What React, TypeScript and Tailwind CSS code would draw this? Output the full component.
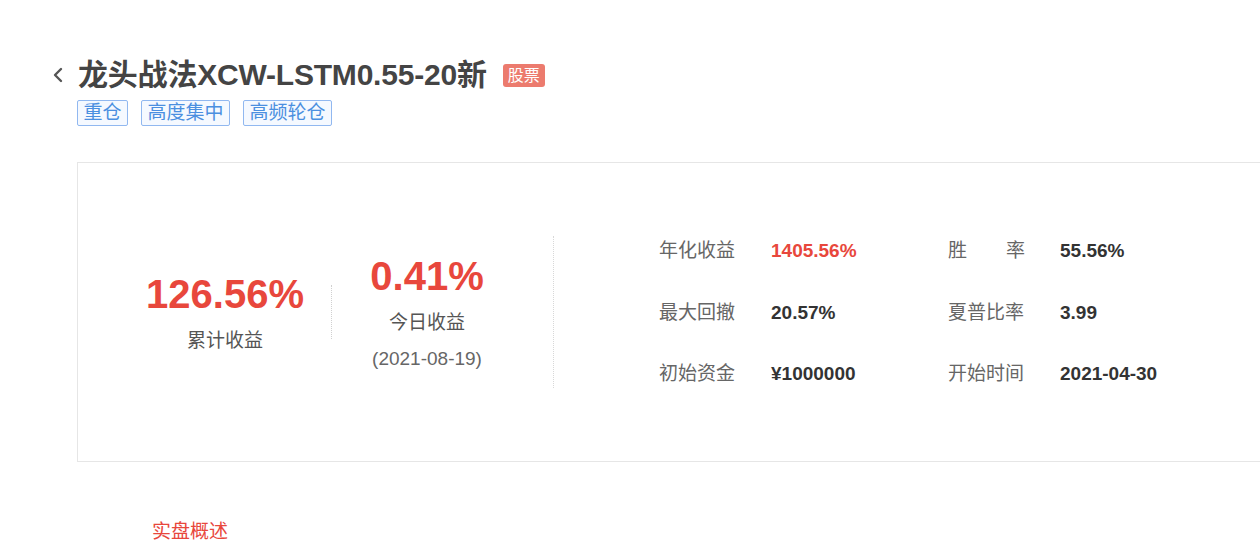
import React from "react";

const font = { fontFamily: '"Liberation Sans", Arial, "Noto Sans CJK SC", sans-serif' };

function Stat({ label, value, red, justify }: { label: string; value: string; red?: boolean; justify?: boolean }) {
  return (
    <div className="flex items-center h-[61.5px]">
      {justify ? (
        <div className="w-[77px] flex justify-between text-[19px] text-[#666666]">
          <span>{label[0]}</span>
          <span>{label[1]}</span>
        </div>
      ) : (
        <div className="w-[77px] text-[19px] text-[#666666] whitespace-nowrap">{label}</div>
      )}
      <div className={`ml-[35px] text-[19px] font-bold ${red ? "text-[#e8473c]" : "text-[#333333]"}`}>{value}</div>
    </div>
  );
}

export default function App() {
  return (
    <div className="w-[1260px] h-[542px] bg-white overflow-hidden" style={font}>
      <div className="pt-[57px] pl-[52px]">
        <div className="flex items-center h-[36px]">
          <svg width="12" height="16" viewBox="0 0 12 16" className="mr-[14px]">
            <path d="M9 2 L3 8 L9 14" fill="none" stroke="#555555" strokeWidth="2.4" strokeLinecap="round" strokeLinejoin="round" />
          </svg>
          <h1 className="text-[30px] font-bold text-[#444444] leading-none tracking-[-0.2px]">龙头战法XCW-LSTM0.55-20新</h1>
          <span className="ml-[16px] bg-[#ec7b6e] text-white text-[16px] leading-[23px] px-[5px] rounded-[3px]">股票</span>
        </div>
        <div className="flex gap-[13px] ml-[25px] mt-[7px]">
          {["重仓", "高度集中", "高频轮仓"].map((t) => (
            <span key={t} className="border border-[#91b8f0] bg-[#f5f9ff] text-[#4b8fe0] text-[19px] leading-[24px] px-[5.5px] rounded-[2px]">
              {t}
            </span>
          ))}
        </div>
      </div>
      <div className="ml-[77px] mt-[36px] w-[1200px] h-[300px] border border-[#e6e6e6] flex items-center pl-[41px]">
        <div className="w-[212px] flex flex-col items-center">
          <div className="text-[40px] font-bold text-[#e8473c] leading-[46px]">126.56%</div>
          <div className="text-[19px] text-[#555555] mt-[12px] leading-[24px]">累计收益</div>
        </div>
        <div className="h-[54px] border-l border-dotted border-[#d0d0d0]" />
        <div className="w-[190px] flex flex-col items-center">
          <div className="text-[40px] font-bold text-[#e8473c] leading-[46px]">0.41%</div>
          <div className="text-[19px] text-[#555555] mt-[12px] leading-[24px]">今日收益</div>
          <div className="text-[19px] text-[#666666] mt-[12px] leading-[24px]">(2021-08-19)</div>
        </div>
        <div className="ml-[31px] h-[152px] border-l border-dotted border-[#d8d8d8]" />
        <div className="ml-[105px] mt-[2px] grid grid-cols-[289px_220px]">
          <Stat label="年化收益" value="1405.56%" red />
          <Stat label="胜率" value="55.56%" justify />
          <Stat label="最大回撤" value="20.57%" />
          <Stat label="夏普比率" value="3.99" />
          <Stat label="初始资金" value="¥1000000" />
          <Stat label="开始时间" value="2021-04-30" />
        </div>
      </div>
      <div className="ml-[152px] mt-[57px] text-[19px] text-[#e8473c] leading-[26px]">实盘概述</div>
    </div>
  );
}
